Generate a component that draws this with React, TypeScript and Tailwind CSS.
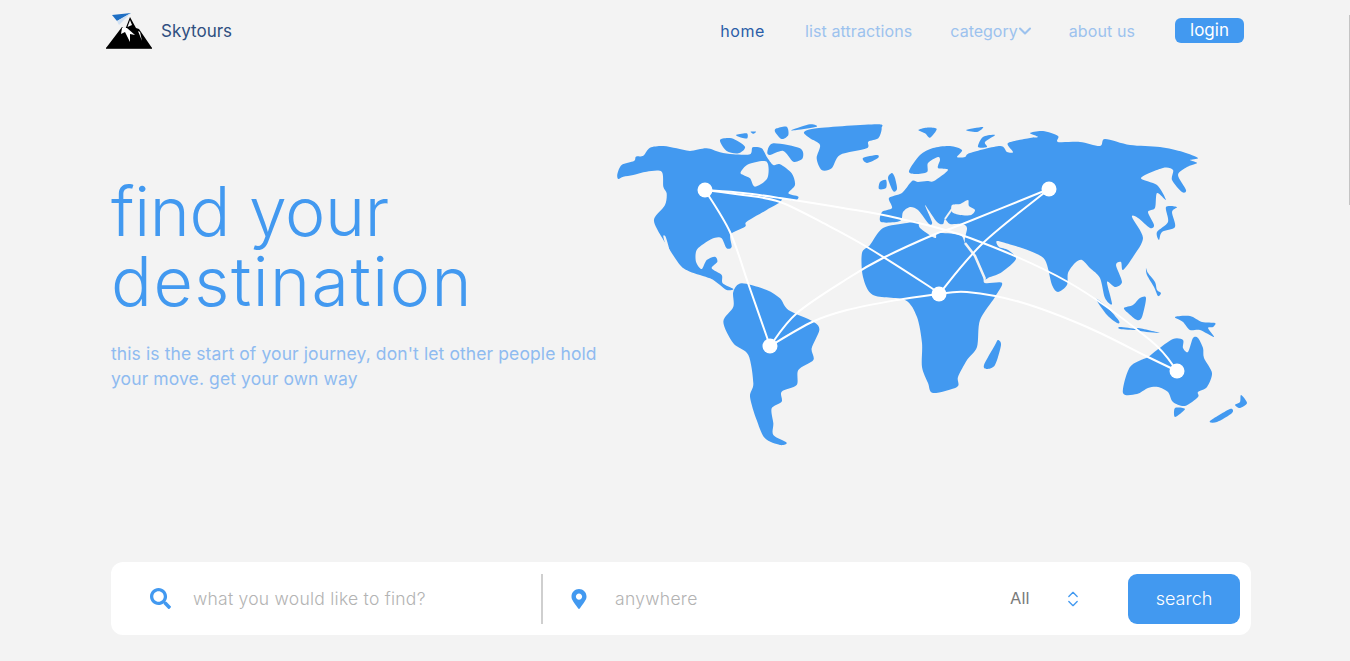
import { ChevronDown, ChevronsUpDown } from "lucide-react";
import { FaSearch, FaMapMarkerAlt } from "react-icons/fa";

type P = number[];
const fmt = (n: number) => n.toFixed(1);
function closed(a: P) {
  const pts: [number, number][] = [];
  for (let i = 0; i < a.length; i += 2) pts.push([a[i], a[i + 1]]);
  const n = pts.length;
  let d = `M${pts[0][0]} ${pts[0][1]}`;
  for (let i = 0; i < n; i++) {
    const p0 = pts[(i - 1 + n) % n], p1 = pts[i], p2 = pts[(i + 1) % n], p3 = pts[(i + 2) % n];
    d += `C${fmt(p1[0] + (p2[0] - p0[0]) / 7)} ${fmt(p1[1] + (p2[1] - p0[1]) / 7)} ${fmt(p2[0] - (p3[0] - p1[0]) / 7)} ${fmt(p2[1] - (p3[1] - p1[1]) / 7)} ${p2[0]} ${p2[1]}`;
  }
  return d + "Z";
}
function open(a: P) {
  const pts: [number, number][] = [];
  for (let i = 0; i < a.length; i += 2) pts.push([a[i], a[i + 1]]);
  const n = pts.length;
  let d = `M${pts[0][0]} ${pts[0][1]}`;
  for (let i = 0; i < n - 1; i++) {
    const p0 = pts[Math.max(i - 1, 0)], p1 = pts[i], p2 = pts[i + 1], p3 = pts[Math.min(i + 2, n - 1)];
    d += `C${fmt(p1[0] + (p2[0] - p0[0]) / 6)} ${fmt(p1[1] + (p2[1] - p0[1]) / 6)} ${fmt(p2[0] - (p3[0] - p1[0]) / 6)} ${fmt(p2[1] - (p3[1] - p1[1]) / 6)} ${p2[0]} ${p2[1]}`;
  }
  return d;
}
const z5 = (a: P) => a.map((v, i) => (i % 2 === 0 ? 610 + v / 3 : 115 + v / 3));
const z7 = (a: P) => a.map((v, i) => (i % 2 === 0 ? 700 + v / 3 : 280 + v / 3));

const land: P[] = [
  // North America
  z5([22,178,35,150,72,138,78,125,100,122,120,98,160,93,200,100,240,108,290,100,330,112,370,118,420,118,428,97,455,100,470,125,490,150,510,148,545,175,555,210,535,235,565,245,555,258,520,250,510,262,470,285,410,320,405,335,362,358,365,395,350,400,335,370,315,368,290,380,260,405,258,440,275,462,290,435,315,425,322,440,305,460,335,480,338,505,370,522,350,525,330,510,300,490,240,470,210,450,170,390,140,340,133,310,165,270,170,235,160,215,155,170,110,170,70,180,40,185,25,192]),
  // Greenland + arctic
  z5([582,52,620,40,800,28,815,40,805,70,775,80,770,100,690,120,665,160,635,165,620,130,630,90,600,70]),
  z5([500,40,530,35,535,60,515,72,495,50]),
  z5([545,45,600,28,620,35,560,45]),
  z5([330,75,365,70,405,95,385,115,350,108]),
  z5([378,60,410,55,412,70,395,68]),
  z5([422,50,438,50,430,56]),
  z5([472,110,490,85,570,100,578,130,550,140,520,108,480,120]),
  z5([925,45,950,38,980,42,960,68,945,55]),
  // South America
  z7([125,10,200,30,240,55,265,90,340,125,358,150,335,205,340,240,295,270,290,315,245,335,245,365,215,385,220,430,220,465,260,488,240,495,195,475,170,420,150,350,160,310,145,225,100,190,70,125,100,80,100,35]),
  // Eurasia
  [881,222,882,212,892,208,889,198,902,193,912,181,918,182,927,181,934,181,948,170,938,168,940,160,938,157,928,163,927,172,915,174,909,171,920,155,933,148,950,146,962,150,957,157,965,157,970,153,1000,146,1007,152,1013,152,1008,143,1030,138,1038,137,1030,133,1043,131,1058,136,1058,142,1080,142,1100,146,1105,139,1130,145,1160,147,1183,152,1198,158,1190,160,1197,163,1187,167,1178,175,1186,190,1182,192,1172,180,1173,170,1163,168,1141,178,1157,185,1166,200,1157,193,1155,208,1148,212,1154,225,1150,228,1138,218,1132,217,1143,238,1133,257,1123,270,1121,262,1116,265,1122,282,1115,287,1107,282,1112,304,1105,298,1100,278,1090,268,1082,260,1075,263,1068,273,1067,285,1058,292,1052,285,1045,260,1030,251,1012,245,997,241,999,247,1008,250,1016,259,1002,272,990,277,984,278,975,256,965,243,967,228,962,224,950,224,945,219,943,224,937,222,925,205,932,222,929,224,918,210,910,207,903,212,900,221],
  // Africa
  [862,253,870,245,883,228,907,223,918,222,920,228,935,238,938,233,960,235,965,243,973,253,983,275,985,283,1002,283,995,297,980,320,977,347,967,360,958,377,957,387,933,393,928,383,922,367,922,343,917,317,905,300,873,295,863,277],
  // Islands
  [998,340,1001,345,995,365,987,369,984,365,995,345],
  [892,173,895,178,897,189,893,191,888,178],
  [880,182,886,180,886,188,879,189],
  [863,158,877,155,878,158,867,163],
  [978,147,983,137,995,135,985,142,987,147],
  [966,130,983,127,977,132],
  [1166,207,1177,207,1172,212,1175,227,1162,232,1159,240,1157,232,1168,222],
  [1146,268,1148,273,1155,282,1157,290,1161,293,1158,296,1154,287,1147,275],
  [1124,308,1133,305,1140,298,1146,298,1142,317,1137,320,1128,313],
  [1096,299,1107,307,1119,321,1117,323,1107,315],
  [1120,327,1136,329,1136,330,1120,329],
  [1138,328,1160,333,1140,331],
  [1175,317,1190,316,1202,322,1215,323,1213,327,1208,328,1214,337,1200,330,1190,330,1183,322],
  [1123,393,1130,367,1148,357,1157,350,1173,339,1183,340,1183,348,1188,352,1193,338,1198,338,1203,348,1204,358,1212,373,1207,387,1198,392,1198,397,1185,406,1173,402,1168,392,1158,387,1148,388,1137,394],
  [1175,408,1185,409,1175,417],
  [1210,421,1230,409,1232,413,1217,422],
  [1241,395,1247,403,1240,408,1235,405,1240,402],
];
const seas: P[] = [
  z5([392,172,415,148,470,140,472,190,435,215,420,190,400,180]),
  [952,205,960,204,968,200,969,206,975,210,971,215,960,215,952,212],
  z5([160,365,168,368,182,420,175,415]),
];
const edges: P[] = [
  [705,190,730,232,748,283,770,346],
  [705,190,743,193,780,198,843,208,897,218,970,238,1068,282,1150,340,1177,371],
  [705,190,743,195,780,202,827,225,867,247,927,285,939,294],
  [939,294,897,300,847,310,812,322,770,346],
  [770,346,797,313,850,277,883,258,933,235,960,225,1049,189],
  [939,294,983,243,1049,189],
  [939,294,967,292,1020,302,1087,327,1148,357,1177,371],
];
const nodes = [[705,190],[1049,189],[770,346],[939,294],[1177,371]];

function WorldMap() {
  return (
    <svg viewBox="610 115 650 335" className="w-[650px] h-[335px] shrink-0 mt-[54px]">
      {land.map((a, i) => <path key={i} d={closed(a)} fill="#4299f0" />)}
      {seas.map((a, i) => <path key={i} d={closed(a)} fill="#f3f3f3" />)}
      <path d="M965 243L975 256L985 279" stroke="#f3f3f3" strokeWidth="2.5" fill="none" />
      <path d="M945 219L952 209" stroke="#f3f3f3" strokeWidth="2" fill="none" />
      {edges.map((a, i) => <path key={i} d={open(a)} fill="none" stroke="#ffffff" strokeWidth="2" strokeLinecap="round" />)}
      {nodes.map(([x, y], i) => <circle key={i} cx={x} cy={y} r="7.5" fill="#fff" />)}
    </svg>
  );
}

function Logo() {
  return (
    <svg viewBox="0 0 47 36" className="w-[47px] h-[36px]">
      <path d="M0 35L16 14L19 17L24 4L30 15L33 16L46 35Z" fill="#000" />
      <path d="M0 35.3H46" stroke="#000" strokeWidth="1" />
      <path d="M16 15L15 21L19 19L24 29L24 21L29 22L21 15Z" fill="#fff" />
      <path d="M24 7L21.5 14L26 12Z" fill="#f3f3f3" />
      <path d="M32 18L36 28L34 19Z" fill="#fff" />
      <path d="M6 2L25 0L11 8Z" fill="#1f6fc4" />
      <path d="M25 0L11 8L13 12Z" fill="#cfe0f2" />
    </svg>
  );
}

export default function App() {
  const font = "font-['Inter','Liberation_Sans',sans-serif]";
  return (
    <div className={`relative w-full h-[661px] overflow-hidden bg-[#f3f3f3] ${font}`}>
      <div className="absolute right-0 top-[15px] h-[190px] w-px bg-[#c4c4c4]" />
      <header className="h-[61px] flex items-center pl-[106px] pr-[106px] justify-between">
        <div className="flex items-center gap-[8px]">
          <Logo />
          <span className="text-[17px] text-[#2f4f80] mt-[2px]">Skytours</span>
        </div>
        <nav className="flex items-center text-[16px] text-[#9cc2ee]">
          <a className="text-[#2a5da8] tracking-[0.6px] mt-[1px]">home</a>
          <a className="ml-[40px] tracking-[0.1px] mt-[1px]">list attractions</a>
          <a className="ml-[38px] flex items-center mt-[1px]">category<ChevronDown size={20} strokeWidth={2.5} className="-ml-[3px] -mr-[4px]" /></a>
          <a className="ml-[38px] mt-[1px] tracking-[0.1px]">about us</a>
          <button className="ml-[40px] w-[69px] h-[25px] rounded-[6px] bg-[#4299f0] text-white text-[17px] leading-none">login</button>
        </nav>
      </header>
      <main className="flex h-[501px] pl-[111px]">
        <div className="w-[499px] shrink-0 pt-[115px]">
          <h1 className="text-[68px] leading-[70px] font-[350] text-[#4299f0]">
            <span className="tracking-[-0.3px]">find your</span><br />
            <span className="tracking-[1.5px]">destination</span>
          </h1>
          <p className="mt-[25px] text-[17.5px] leading-[25px] text-[#8fbbf0] tracking-[0.1px]">this is the start of your journey, don't let other people hold<br />your move. get your own way</p>
        </div>
        <WorldMap />
      </main>
      <section className="ml-[111px] w-[1140px] h-[73px] bg-white rounded-[12px] flex items-center">
        <div className="w-[430px] flex items-center pl-[39px] shrink-0">
          <FaSearch className="text-[#4299f0] w-[21px] h-[21px]" />
          <span className="ml-[22px] text-[17.5px] font-light text-[#b3b3b3] tracking-[0.25px] mt-[2px]">what you would like to find?</span>
        </div>
        <div className="w-[2px] h-[50px] bg-[#cfcfcf] shrink-0" />
        <div className="w-[467px] flex items-center pl-[26px] shrink-0">
          <FaMapMarkerAlt className="text-[#4299f0] w-[20px] h-[20px]" />
          <span className="ml-[26px] text-[17.5px] font-light text-[#b3b3b3] tracking-[0.3px] mt-[2px]">anywhere</span>
        </div>
        <span className="text-[16.5px] text-[#7a7a7a] w-[53px]">All</span>
        <ChevronsUpDown size={20} strokeWidth={1.6} className="text-[#4299f0]" />
        <button className="ml-[45px] w-[112px] h-[50px] rounded-[9px] bg-[#4299f0] text-white text-[18px] font-light">search</button>
      </section>
    </div>
  );
}
